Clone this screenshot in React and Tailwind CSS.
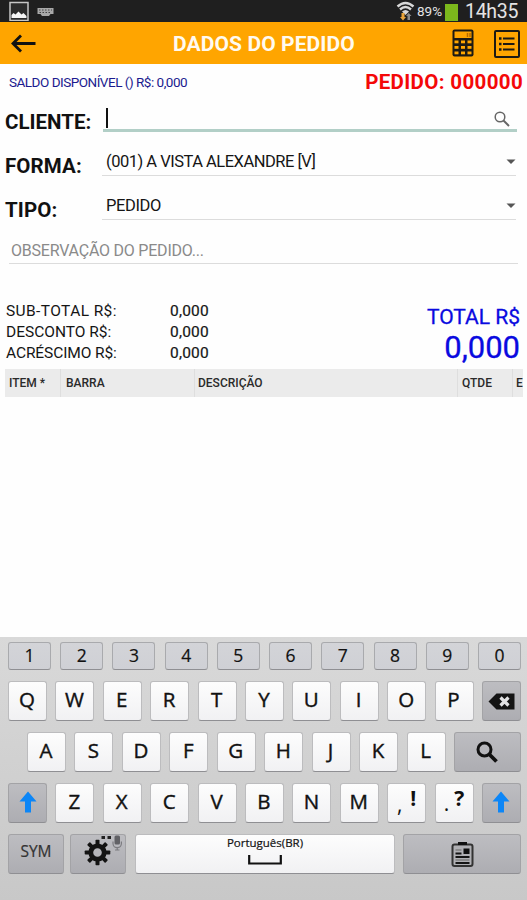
import clsx from 'clsx'

const NUMBERS = ['1', '2', '3', '4', '5', '6', '7', '8', '9', '0']
const ROW_ONE = ['Q', 'W', 'E', 'R', 'T', 'Y', 'U', 'I', 'O', 'P']
const ROW_TWO = ['A', 'S', 'D', 'F', 'G', 'H', 'J', 'K', 'L']
const ROW_THREE = ['Z', 'X', 'C', 'V', 'B', 'N', 'M']

const TOTALS = [
    { label: 'SUB-TOTAL R$:', value: '0,000', tracking: 'tracking-[0.4px]' },
    { label: 'DESCONTO R$:', value: '0,000', tracking: 'tracking-[0px]' },
    { label: 'ACRÉSCIMO R$:', value: '0,000', tracking: 'tracking-[-0.1px]' },
]

const COLUMNS = [
    { label: 'ITEM *', className: 'w-[56px] pl-[4px]' },
    { label: 'BARRA', className: 'w-[134px] pl-[5px]' },
    { label: 'DESCRIÇÃO', className: 'w-[263px] pl-[3px]' },
    { label: 'QTDE', className: 'w-[55px] pl-[4px]' },
    { label: 'E', className: 'w-[10px] pl-[3px]' },
]

const StatusBar = () => (
    <div className="flex h-[22px] items-center bg-[#1f1f1f] text-[#e4e4e4]">
        <svg className="ml-[9px] h-[20px] w-[20px]" viewBox="0 0 20 20">
            <rect x="1" y="1.5" width="18" height="18" fill="#2b2b2b" stroke="#c6c6c6" strokeWidth="1.5" />
            <path d="M2.500 17v-3l2-2 2 1.500 3-3 3 3 2-1.500 3 3v2z" fill="#f5f5f5" />
        </svg>
        <svg className="mt-[1px] ml-[8px] h-[10px] w-[17px]" viewBox="0 0 17 10">
            <path d="M0.500 1h16v6h-3l-1.500 2h-7l-1.500-2h-3z" fill="#a8a8a8" />
            <path d="M2 3h13M2.500 5.500h12" stroke="#444" strokeWidth="1" strokeDasharray="1.5 1.5" />
        </svg>
        <div className="ml-auto flex items-center">
            <svg className="h-[20px] w-[19px]" viewBox="0 0 19 20">
                <path d="M1.500 5.500Q9.500-1.500 17.500 5.500" fill="none" stroke="#d8d8d8" strokeWidth="2.400" />
                <path d="M4 8.500Q9.500 3.500 15 8.500" fill="none" stroke="#d8d8d8" strokeWidth="2.400" />
                <path d="M6 10.500Q9.500 7.500 13 10.500L9.500 14z" fill="#d8d8d8" />
                <path d="M5.500 12h3v4h1.500l-3 3.500-3-3.500h1.500z" fill="#e8a33a" />
                <path d="M11.500 19v-4H10l2.700-3 2.800 3H14v4z" fill="#8a8a8a" />
            </svg>
            <span className="mt-[1px] ml-[2px] w-[27px] whitespace-nowrap text-[13.500px]">89%</span>
            <span className="mt-[3px] ml-[1px] h-[17px] w-[13px] bg-[#7cb81c]" />
            <span className="mt-[1px] mr-[8px] ml-[7px] w-[54px] whitespace-nowrap text-[19.500px] tracking-[-0.300px]">14h35</span>
        </div>
    </div>
)

const AppBar = () => (
    <header className="flex h-[42px] items-center bg-[#ffa500]">
        <svg className="ml-[10px] h-[20px] w-[27px]" viewBox="0 0 27 20" fill="none" stroke="#111" strokeWidth="2.800">
            <path d="M25.500 10.500H3M11 2.500L3 10.500l8 8" />
        </svg>
        <h1 className="mt-[3px] ml-[136px] whitespace-nowrap text-[21px] font-bold tracking-[0.100px] text-[#fffaf0]">DADOS DO PEDIDO</h1>
        <svg className="ml-auto h-[28px] w-[22px]" viewBox="0 0 22 28">
            <rect x="0.500" y="0.500" width="21" height="27" rx="2" fill="#1c1a14" />
            <rect x="2.500" y="2.500" width="17" height="6.500" fill="#ffa500" />
            <path d="M15.500 4v4M18 4v4" stroke="#b66a00" strokeWidth="1.500" />
            <g fill="#ffa500">
                <rect x="2.500" y="11.500" width="4" height="2.800" />
                <rect x="9" y="11.500" width="4" height="2.800" />
                <rect x="15.500" y="11.500" width="4" height="2.800" />
                <rect x="2.500" y="17" width="4" height="2.800" />
                <rect x="9" y="17" width="4" height="2.800" />
                <rect x="15.500" y="17" width="4" height="2.800" />
                <rect x="2.500" y="22.500" width="4" height="2.800" />
                <rect x="9" y="22.500" width="4" height="2.800" />
                <rect x="15.500" y="22.500" width="4" height="2.800" />
            </g>
        </svg>
        <svg className="mt-[1px] mr-[7px] ml-[20px] h-[28px] w-[26px]" viewBox="0 0 26 28" stroke="#1c1a14" fill="none">
            <rect x="1" y="1" width="24" height="26" rx="1" strokeWidth="2" />
            <path d="M9 8.500h11.500M9 14h11.500M9 19.500h11.500" strokeWidth="2" />
            <path d="M5 8.500h2.500M5 14h2.500M5 19.500h2.500" strokeWidth="2.500" />
        </svg>
    </header>
)

const Caret = () => (
    <svg className="mb-[2px] ml-auto h-[5px] w-[10px]" viewBox="0 0 10 5">
        <path d="M0.500 0.500h9L5 5z" fill="#555" />
    </svg>
)

const SelectRow = ({ label, value, tracking }) => (
    <div className="flex h-[44px] items-start">
        <span className="w-[97px] text-[20.500px] leading-[44px] font-bold tracking-[0.100px] text-[#111]">{label}</span>
        <div className="flex h-[32px] w-[414px] items-center border-b border-[#dcdcdc] pt-[6px] pl-[4px] text-[16.5px] text-[#151515]">
            <span className={clsx('whitespace-nowrap', tracking)}>{value}</span>
            <Caret />
        </div>
    </div>
)

const OrderForm = () => (
    <section className="px-[5px]">
        <div className="flex h-[36px] items-center justify-between pl-[4px]">
            <span className="text-[13.500px] tracking-[-0.490px] whitespace-nowrap text-[#1b1b8f]">SALDO DISPONÍVEL () R$: 0,000</span>
            <span className="-mr-[1px] text-[20.500px] font-bold tracking-[0.350px] whitespace-nowrap text-[#f40808]">PEDIDO: 000000</span>
        </div>
        <div className="flex h-[44px] items-start">
            <span className="w-[98px] text-[20.500px] leading-[44px] font-bold text-[#111]">CLIENTE:</span>
            <div className="flex h-[32px] w-[414px] items-center border-b-[3px] border-[#b2cfc7] pt-[6px] pl-[3px]">
                <span className="h-[20px] w-[1.500px] bg-[#111]" />
                <svg className="mt-[2px] mr-[7px] ml-auto h-[16px] w-[16px]" viewBox="0 0 16 16" fill="none" stroke="#666">
                    <circle cx="6" cy="6" r="4.800" strokeWidth="1.500" />
                    <path d="M9.500 9.500l5.500 5.500" strokeWidth="1.900" />
                </svg>
            </div>
        </div>
        <SelectRow label="FORMA:" value="(001) A VISTA ALEXANDRE [V]" tracking="tracking-[-0.500px]" />
        <SelectRow label="TIPO:" value="PEDIDO" tracking="tracking-[-0.400px]" />
        <div className="ml-[4px] flex h-[32px] w-[509px] items-center border-b border-[#dcdcdc] pt-[6px] pl-[2px] text-[16px] tracking-[-0.220px] text-[#8a8a8a]">
            <span className="whitespace-nowrap">OBSERVAÇÃO DO PEDIDO...</span>
        </div>
    </section>
)

const Summary = () => (
    <section className="mt-[36px] flex h-[69px] justify-between pr-[7px] pl-[6px]">
        <div className="pt-[1px]">
            {TOTALS.map(({ label, value, tracking }) => (
                <div key={label} className="flex h-[21px] items-center text-[15.500px] leading-[21px] text-[#151515]">
                    <span className={clsx('w-[164px] whitespace-nowrap', tracking)}>{label}</span>
                    <span className="tracking-[0.200px] [-webkit-text-stroke:0.2px]">{value}</span>
                </div>
            ))}
        </div>
        <div className="text-right text-[#0a0ae0] [-webkit-text-stroke:0.3px]">
            <div className="pt-[4px] text-[21px] leading-[26px]">TOTAL R$</div>
            <div className="text-[31px] leading-[35px]">0,000</div>
        </div>
    </section>
)

const ItemsHeader = () => (
    <div className="mx-[5px] flex h-[28px] w-[518px] overflow-hidden bg-[#ebebeb] text-[12px] leading-[28px] font-medium text-[#2a2a2a]">
        {COLUMNS.map(({ label, className }) => (
            <span key={label} className={clsx('shrink-0 overflow-hidden border-r border-[#dedede] whitespace-nowrap last:border-r-0', className)}>
                {label}
            </span>
        ))}
    </div>
)

const Key = ({ children, className, variant = 'light' }) => (
    <div
        className={clsx(
            'flex shrink-0 items-center justify-center rounded-[3px] border border-b-[#8f8f93] text-[#111]',
            variant === 'light' && 'border-[#bcbcbe] bg-gradient-to-b from-[#fdfdfd] to-[#f1f1f3]',
            variant === 'number' && 'border-[#a9aaad] bg-gradient-to-b from-[#d3d4d8] to-[#cfd0d5]',
            variant === 'dark' && 'border-[#a3a3a6] bg-gradient-to-b from-[#bdbdc1] to-[#adadb2]',
            className,
        )}
    >
        {children}
    </div>
)

const LetterKey = ({ letter }) => (
    <Key className="h-[40px] w-[39px] pr-[1px] pb-[3px] text-[20.500px] [-webkit-text-stroke:0.4px]">{letter}</Key>
)

const ShiftKey = () => (
    <Key variant="dark" className="h-[40px] w-[39px]">
        <svg className="-mt-[2px] h-[22px] w-[18px]" viewBox="0 0 18 22">
            <path d="M9 0.500L17.500 10.500H12V21.500H6V10.500H0.500z" fill="#0c86f7" />
        </svg>
    </Key>
)

const Gear = () => (
    <svg className="h-[38px] w-[54px]" viewBox="0 0 54 38">
        <g transform="translate(26.500 17.500)" fill="#141414">
            {[0, 45, 90, 135, 180, 225, 270, 315].map((angle) => (
                <rect key={angle} x="-2" y="-12.800" width="4" height="5" rx="0.800" transform={`rotate(${angle})`} />
            ))}
            <circle r="6.700" fill="none" stroke="#141414" strokeWidth="4.800" />
        </g>
        <path d="M30.500 2.500h3.500M36.500 2.500h3.500" stroke="#222" strokeWidth="3" />
        <rect x="43.500" y="0.500" width="5.500" height="9" rx="1.500" fill="#626266" />
        <path d="M42 6.500v2a4.200 4.200 0 0 0 8.400 0v-2M46.200 12.500v2.500M44 15h4.500" fill="none" stroke="#7c7c80" strokeWidth="1.200" />
    </svg>
)

const Clipboard = () => (
    <svg className="mt-[1px] h-[25px] w-[23px]" viewBox="0 0 23 25">
        <rect x="1.500" y="2.500" width="20" height="21.500" rx="2" fill="#b0b0b4" stroke="#333" strokeWidth="2" />
        <path d="M7 1.500h9" stroke="#111" strokeWidth="3" />
        <rect x="12.500" y="6.500" width="6" height="5.500" fill="#111" />
        <path d="M4.500 8h6" stroke="#777" strokeWidth="1.300" />
        <path d="M4.500 11.500h6M4.500 15h14M4.500 21h14" stroke="#151515" strokeWidth="1.800" />
        <path d="M4.500 18h14" stroke="#777" strokeWidth="1.300" />
    </svg>
)

const Keyboard = () => (
    <section className="mt-auto flex h-[263px] flex-col bg-gradient-to-b from-[#d9d9d9] to-[#c8c8c8] pt-[5px] pr-[6px] pl-[8px] font-['Open_Sans',sans-serif]">
        <div className="flex justify-between">
            {NUMBERS.map((n) => (
                <Key key={n} variant="number" className="h-[28px] w-[43px] pb-[2px] text-[17.500px] [-webkit-text-stroke:0.2px]">{n}</Key>
            ))}
        </div>
        <div className="mt-[11px] flex justify-between">
            {ROW_ONE.map((l) => <LetterKey key={l} letter={l} />)}
            <Key variant="dark" className="h-[40px] w-[39px]">
                <svg className="h-[17px] w-[27px]" viewBox="0 0 27 17">
                    <path d="M0.500 8.500L8.500 0.500H26.500V16.500H8.500z" fill="#141414" />
                    <path d="M12.500 4.500l8 8M20.500 4.500l-8 8" stroke="#e2e2e4" strokeWidth="3.200" />
                </svg>
            </Key>
        </div>
        <div className="mt-[11px] flex justify-between pl-[19px]">
            {ROW_TWO.map((l) => <LetterKey key={l} letter={l} />)}
            <Key variant="dark" className="h-[40px] w-[67px]">
                <svg className="-mt-[1px] h-[22px] w-[22px]" viewBox="0 0 22 22" fill="none" stroke="#111">
                    <circle cx="8.500" cy="8.500" r="6.500" strokeWidth="3" />
                    <path d="M13 13l7.500 7.500" strokeWidth="3.800" />
                </svg>
            </Key>
        </div>
        <div className="mt-[11px] flex justify-between">
            <ShiftKey />
            {ROW_THREE.map((l) => <LetterKey key={l} letter={l} />)}
            <Key className="h-[40px] w-[39px] gap-[8px] text-[21px] leading-none">
                <span className="pt-[2px]">,</span>
                <span className="pb-[9px] font-bold">!</span>
            </Key>
            <Key className="h-[40px] w-[39px] gap-[5px] text-[21px] leading-none">
                <span>.</span>
                <span className="pb-[9px] font-bold">?</span>
            </Key>
            <ShiftKey />
        </div>
        <div className="mt-[11px] flex">
            <Key variant="dark" className="h-[40px] w-[56px] pb-[4px] text-[15.500px] text-[#333] [-webkit-text-stroke:0.2px]">SYM</Key>
            <Key variant="dark" className="ml-[6px] h-[40px] w-[56px]"><Gear /></Key>
            <Key className="ml-[9px] h-[40px] w-[260px] flex-col !justify-start">
                <span className="text-[11.500px] leading-[15px] whitespace-nowrap [-webkit-text-stroke:0.2px]">Português(BR)</span>
                <svg className="mt-[4px] h-[11px] w-[34px]" viewBox="0 0 34 11">
                    <path d="M1.200 1v8.500h31.600V1" fill="none" stroke="#111" strokeWidth="2.200" />
                </svg>
            </Key>
            <Key variant="dark" className="ml-auto h-[40px] w-[118px]"><Clipboard /></Key>
        </div>
    </section>
)

const App = () => (
    <div className="flex h-[900px] w-[527px] flex-col overflow-hidden bg-[#fefefe] font-['Roboto',sans-serif]">
        <StatusBar />
        <AppBar />
        <OrderForm />
        <Summary />
        <ItemsHeader />
        <Keyboard />
    </div>
)

export default App
